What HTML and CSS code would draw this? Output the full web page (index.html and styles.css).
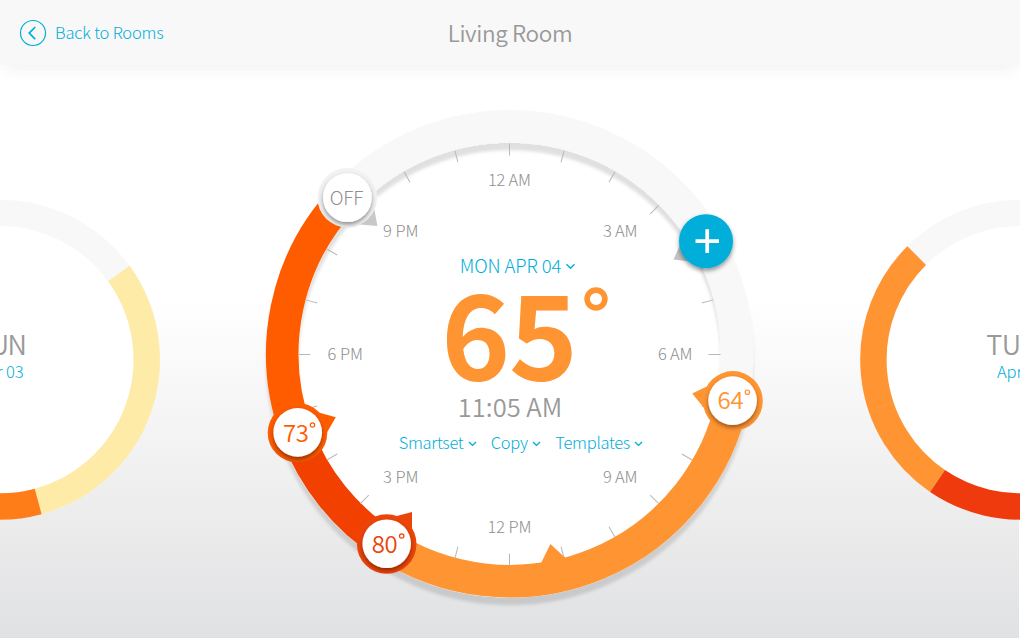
FILE: index.html
```html
<!DOCTYPE html>
<html lang="en">
<head>
<meta charset="utf-8">
<title>Living Room</title>
<link rel="stylesheet" href="styles.css">
</head>
<body>
<header class="topbar">
  <a class="back">
    <svg class="back-icon" width="28" height="28" viewBox="0 0 28 28"><circle cx="14" cy="14" r="12.5"/><path d="M16.2 8 10.2 14.1 16.2 20.2" stroke-width="1.7"/></svg>
    <span>Back to Rooms</span>
  </a>
  <h1 class="title">Living Room</h1>
</header>
<main class="stage">
  <svg class="dials" width="1020" height="573" viewBox="0 65 1020 573">
    <defs>
      <filter id="knob" x="-30%" y="-30%" width="160%" height="170%"><feDropShadow dx="0" dy="2.5" stdDeviation="2" flood-color="#000" flood-opacity=".42"/></filter>
      <filter id="ring" x="-10%" y="-10%" width="120%" height="120%"><feDropShadow dx="0" dy="7.5" stdDeviation="1.7" flood-color="#000" flood-opacity=".12"/></filter>
      <path id="tick" d="M0-211V-199"/>
      <linearGradient id="lower73" x2="0" y2="1"><stop offset=".7" stop-color="#ff5c00"/><stop offset="1" stop-color="#f25500"/></linearGradient>
    </defs>

    <!-- previous day -->
    <g class="side">
      <circle class="face" cx="0" cy="359.7" r="147"/>
      <circle class="track" cx="0" cy="359.7" r="146.8"/>
      <path class="yellow" d="M118.9 273.6A146.8 146.8 0 0 1 38.2 501.4"/>
      <path class="amber" d="M38.2 501.4A146.8 146.8 0 0 1-20 505.1"/>
      <text class="day" x="-25" y="355" textLength="52">SUN</text>
      <text class="date" x="-23" y="378" textLength="46.5">Apr 03</text>
    </g>

    <!-- next day -->
    <g class="side">
      <circle class="face" cx="1020" cy="359.7" r="147"/>
      <circle class="track" cx="1020" cy="359.7" r="146.8"/>
      <path class="orange" d="M916.7 255.6A146.8 146.8 0 0 0 937.5 481"/>
      <path class="red" d="M937.5 481A146.8 146.8 0 0 0 1040 505.1"/>
      <path class="seam" d="M868.5 410 893 402.8"/>
      <text class="day" x="986.3" y="355" textLength="50">TUE</text>
      <text class="date" x="997" y="378" textLength="46.5">Apr 05</text>
    </g>

    <!-- current day -->
    <circle class="face" cx="509.7" cy="353.8" r="228"/>
    <g class="main-ring" filter="url(#ring)">
      <circle class="track" cx="509.7" cy="353.8" r="227.4"/>
      <path class="orange" d="M732.3 400.6A227.4 227.4 0 0 1 386.7 545"/>
      <path class="deep" d="M386.7 545A227.4 227.4 0 0 1 296.5 432.9"/>
      <path class="hot" d="M296.5 432.9A227.4 227.4 0 0 1 345 197"/>
    </g>
    <g class="ticks" transform="translate(509.5 354.5)">
      <use href="#tick"/><use href="#tick" transform="rotate(15)"/><use href="#tick" transform="rotate(30)"/><use href="#tick" transform="rotate(45)"/><use href="#tick" transform="rotate(75)"/><use href="#tick" transform="rotate(90)"/><use href="#tick" transform="rotate(105)"/><use href="#tick" transform="rotate(120)"/><use href="#tick" transform="rotate(135)"/><use href="#tick" transform="rotate(150)"/><use href="#tick" transform="rotate(165)"/><use href="#tick" transform="rotate(180)"/><use href="#tick" transform="rotate(195)"/><use href="#tick" transform="rotate(225)"/><use href="#tick" transform="rotate(240)"/><use href="#tick" transform="rotate(255)"/><use href="#tick" transform="rotate(270)"/><use href="#tick" transform="rotate(285)"/><use href="#tick" transform="rotate(300)"/><use href="#tick" transform="rotate(330)"/><use href="#tick" transform="rotate(345)"/>
    </g>
    <path fill="#ff9432" d="M541 563.2 550.4 544 565.7 558.3 563 568H542z"/>

    <g class="hours">
      <text x="488" y="186.3" textLength="43">12 AM</text>
      <text x="603" y="237" textLength="34.5">3 AM</text>
      <text x="658" y="360" textLength="34.5">6 AM</text>
      <text x="603" y="483" textLength="34.5">9 AM</text>
      <text x="487.5" y="533" textLength="44">12 PM</text>
      <text x="383" y="483" textLength="35.5">3 PM</text>
      <text x="327.5" y="360" textLength="35.5">6 PM</text>
      <text x="383" y="237" textLength="35.5">9 PM</text>
    </g>

    <g class="handle">
      <path fill="#c8c8c8" d="M377.4 226 374.3 209 360 224.4z"/>
      <circle fill="#f2f2f2" cx="347.3" cy="197.8" r="29.8"/>
      <circle class="knob" cx="347.4" cy="197.6" r="24.4"/>
      <text class="off" x="329.8" y="205" textLength="33.5">OFF</text>
    </g>
    <g class="handle">
      <path fill="#c2c2c2" d="M673.5 259.5 681 243 690 261.6z"/>
      <circle class="add" cx="706" cy="241.2" r="27"/>
      <path class="plus" d="M695.5 241.2H719M707.2 229.2V253"/>
    </g>
    <g class="handle" fill="#ff9432">
      <path d="M692.2 393.4 712 384 709 414z"/>
      <circle cx="732.9" cy="401" r="29.9"/>
      <circle class="knob" cx="732.6" cy="400.6" r="24.3"/>
      <text class="temp" x="717.6" y="409" textLength="26">64</text>
      <circle class="degree" stroke="#ff9432" cx="747.4" cy="392.2" r="2.2"/>
    </g>
    <g class="handle" fill="#ff5c00">
      <path d="M335.8 417.3 316 411.7 322 441z"/>
      <circle fill="url(#lower73)" cx="297.5" cy="432.8" r="29.8"/>
      <circle class="knob" cx="297.7" cy="432.4" r="24.3"/>
      <text class="temp" x="282.9" y="442" textLength="26">73</text>
      <circle class="degree" stroke="#ff5c00" cx="312.5" cy="425" r="2.2"/>
    </g>
    <g class="handle" fill="#ec4409">
      <path d="M412 512 393 517 412 536z"/>
      <circle cx="386.7" cy="544" r="29.8"/>
      <circle class="knob" cx="386.7" cy="543.8" r="24.3"/>
      <text class="temp" x="371.7" y="553" textLength="26">80</text>
      <circle class="degree" stroke="#f24000" cx="401.7" cy="536" r="2.2"/>
    </g>
  </svg>

  <section class="readout">
    <a class="day-picker">MON APR 04<svg class="chev" width="11" height="7" viewBox="0 0 11 7"><path d="M1.5 1.2 5.5 5.2 9.5 1.2"/></svg></a>
    <div class="temperature"><span class="value">65</span><svg class="big-degree" width="24" height="24"><circle cx="12" cy="12" r="8.9"/></svg></div>
    <div class="time">11:05 AM</div>
    <nav class="actions">
      <a>Smartset<svg class="chev" width="9" height="6" viewBox="0 0 9 6"><path d="M1 1.1 4.5 4.4 8 1.1"/></svg></a>
      <a>Copy<svg class="chev" width="9" height="6" viewBox="0 0 9 6"><path d="M1 1.1 4.5 4.4 8 1.1"/></svg></a>
      <a>Templates<svg class="chev" width="9" height="6" viewBox="0 0 9 6"><path d="M1 1.1 4.5 4.4 8 1.1"/></svg></a>
    </nav>
  </section>
</main>
</body>
</html>
```

FILE: styles.css
```css
* { box-sizing: border-box; }
body {
  margin: 0;
  width: 1020px;
  height: 638px;
  overflow: hidden;
  background: #fff;
  color: #999;
  font-family: "Noto Sans CJK SC", "Noto Sans", sans-serif;
  font-weight: 300;
}
.topbar {
  position: relative;
  height: 65px;
  display: grid;
  grid-template-columns: 1fr auto 1fr;
  align-items: center;
  padding: 0 18.5px;
  background: #f8f8f8;
  box-shadow: 0 8px 16px -4px rgba(0, 0, 0, .06);
}
.back { display: flex; align-items: center; gap: 8.5px; color: #00aed9; font-size: 16.5px; line-height: 24px; letter-spacing: -.18px; }
.back span { margin-top: -1.5px; }
.back-icon { fill: none; stroke: #00aed9; stroke-width: 1.2; }
.title { margin: -2px 0 0; font-size: 22.5px; line-height: 30px; font-weight: 350; letter-spacing: -.35px; }
.stage {
  display: grid;
  width: 1019px;
  height: 573px;
  background: linear-gradient(#fff 0, #fff 235px, #eaeaeb 475px, #e0e1e3 573px);
}
.dials, .readout { grid-area: 1 / 1; }
.face { fill: #fff; }
.track, .side path, .main-ring path { fill: none; }
.track { stroke: #f8f8f8; }
.side { stroke-width: 26.4; }
.main-ring { stroke-width: 32.6; }
.yellow { stroke: #ffeba8; }
.amber { stroke: #ff7d19; }
.orange { stroke: #ff9432; }
.red { stroke: #ee3a0c; }
.deep { stroke: #f24000; }
.hot { stroke: #ff5c00; }
.side .seam { stroke: #ffa04b; stroke-width: .6; }
.side text, .hours text, .handle text { stroke: none; }
.day { font-size: 27px; font-weight: 350; fill: #999; }
.date { font-size: 16.5px; fill: #00aed9; }
.ticks { fill: none; stroke: #b8b8b8; stroke-width: 1; }
.hours { font-size: 16.5px; fill: #8f8f8f; }
.knob { fill: #fff; filter: url(#knob); }
.off { font-size: 19px; fill: #8f8f8f; }
.temp { font-size: 24px; font-weight: 350; }
.degree { fill: none; stroke-width: 1.2; }
.handle .add { fill: #00aed9; filter: url(#knob); }
.plus { fill: none; stroke: #fff; stroke-width: 3.7; }
.readout { position: relative; padding-top: 187.7px; display: flex; flex-direction: column; align-items: center; }
.chev { position: relative; top: 1.5px; fill: none; stroke: #00aed9; stroke-width: 1.4; }
.day-picker { display: flex; align-items: center; gap: 4px; margin-left: 16px; color: #00aed9; font-size: 18.5px; line-height: 24px; letter-spacing: -.2px; word-spacing: .4px; }
.temperature { display: flex; gap: 8px; margin: 7px 0 17px 29px; height: 90px; }
.value { color: #ff9432; font-size: 117px; line-height: 90px; font-weight: 700; letter-spacing: -1.2px; }
.big-degree { margin: 3px 0 0 -1px; fill: none; stroke: #ff9432; stroke-width: 5.6; }
.time { font-size: 25.5px; line-height: 30px; font-weight: 350; }
.actions { display: flex; gap: 14.2px; margin: 9.5px 0 0 22px; color: #00aed9; font-size: 16.5px; line-height: 24px; letter-spacing: -.3px; }
.actions a { display: flex; align-items: center; gap: 4.3px; }
```
